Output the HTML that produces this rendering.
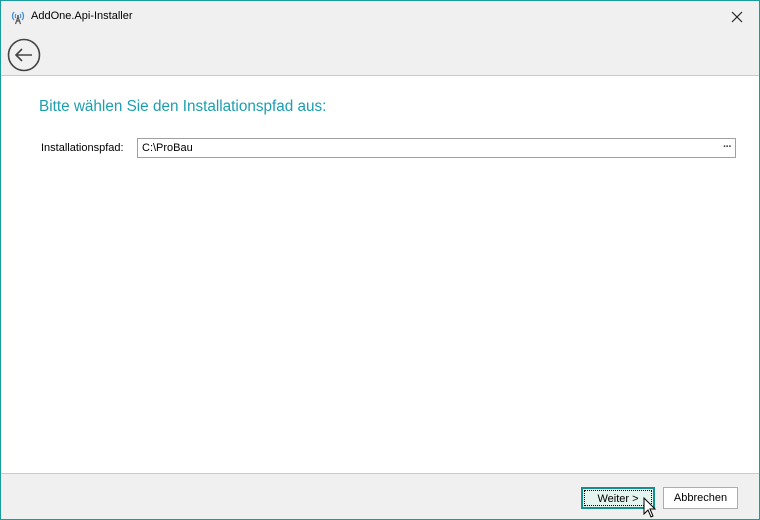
<!DOCTYPE html>
<html><head><meta charset="utf-8"><style>
*{margin:0;padding:0;box-sizing:border-box}
body{width:760px;height:520px;overflow:hidden;font-family:"Liberation Sans",sans-serif;font-size:12px;color:#000}
.win{position:absolute;left:0;top:0;width:760px;height:520px;border:1px solid #1a9c9c;background:#f0f0f0}
.head{position:absolute;left:0;top:0;width:758px;height:75px;background:#f0f0f0;border-bottom:1px solid #cacaca}
.title{position:absolute;left:30px;top:9px;font-size:11px;color:#000}
.content{position:absolute;left:0;top:75px;width:758px;height:398px;background:#fff;border-bottom:1px solid #cacaca}
.h{position:absolute;left:38px;top:22px;font-size:15.3px;color:#1c9eb0}
.lbl{position:absolute;left:40px;top:66px;font-size:11px}
.inp{position:absolute;left:136px;top:62px;width:599px;height:20px;border:1px solid #a0a0a0;background:#fff;font-size:11px;padding:3px 0 0 4px}
.dots{position:absolute;right:4px;top:2px;color:#444;font-size:11px;font-weight:bold;letter-spacing:-1px}
.btn{position:absolute;top:486px;height:22px;font-size:11px;text-align:center;line-height:20px}
.b1{left:580px;width:74px;border:2px solid #138f8f;background:#e4f4ef;outline:1px dotted #000;outline-offset:-4px}
.b2{left:662px;width:75px;border:1px solid #adadad;background:#fff;line-height:20px}
</style></head><body>
<div class="win">
<div class="head">
<svg style="position:absolute;left:9px;top:8px" width="16" height="16" viewBox="0 0 16 16" fill="none" stroke-width="1.2">
<path d="M4 3a6 6 0 0 0 0 8M12 3a6 6 0 0 1 0 8" stroke="#3c8ad8"/>
<path d="M6 5a3 3 0 0 0 0 4M10 5a3 3 0 0 1 0 4" stroke="#3c8ad8"/>
<circle cx="8" cy="7" r="1" fill="#555" stroke="none"/>
<path d="M8 8L5.5 15M8 8l2.5 7M6.5 12h3" stroke="#555"/>
</svg>
<div class="title">AddOne.Api-Installer</div>
<svg style="position:absolute;left:730px;top:10px" width="12" height="12" viewBox="0 0 12 12"><path d="M1 1l10 10M11 1L1 11" stroke="#222" stroke-width="1.2"/></svg>
<svg style="position:absolute;left:6px;top:37px" width="34" height="34" viewBox="0 0 34 34" fill="none" stroke="#444" stroke-width="1.6">
<circle cx="17" cy="17" r="15.5"/><path d="M9 17h16M15 11l-6 6 6 6"/></svg>
</div>
<div class="content">
<div class="h">Bitte wählen Sie den Installationspfad aus:</div>
<div class="lbl">Installationspfad:</div>
<div class="inp">C:\ProBau<span class="dots">···</span></div>
</div>
<div class="btn b1">Weiter &gt;</div>
<div class="btn b2">Abbrechen</div>
<svg style="position:absolute;left:642px;top:496px" width="14" height="22" viewBox="0 0 14 22"><path d="M1 1v16l4-4 3 7 2-1-3-7h5z" fill="#fff" stroke="#000" stroke-width="1"/></svg>
</div>
</body></html>
